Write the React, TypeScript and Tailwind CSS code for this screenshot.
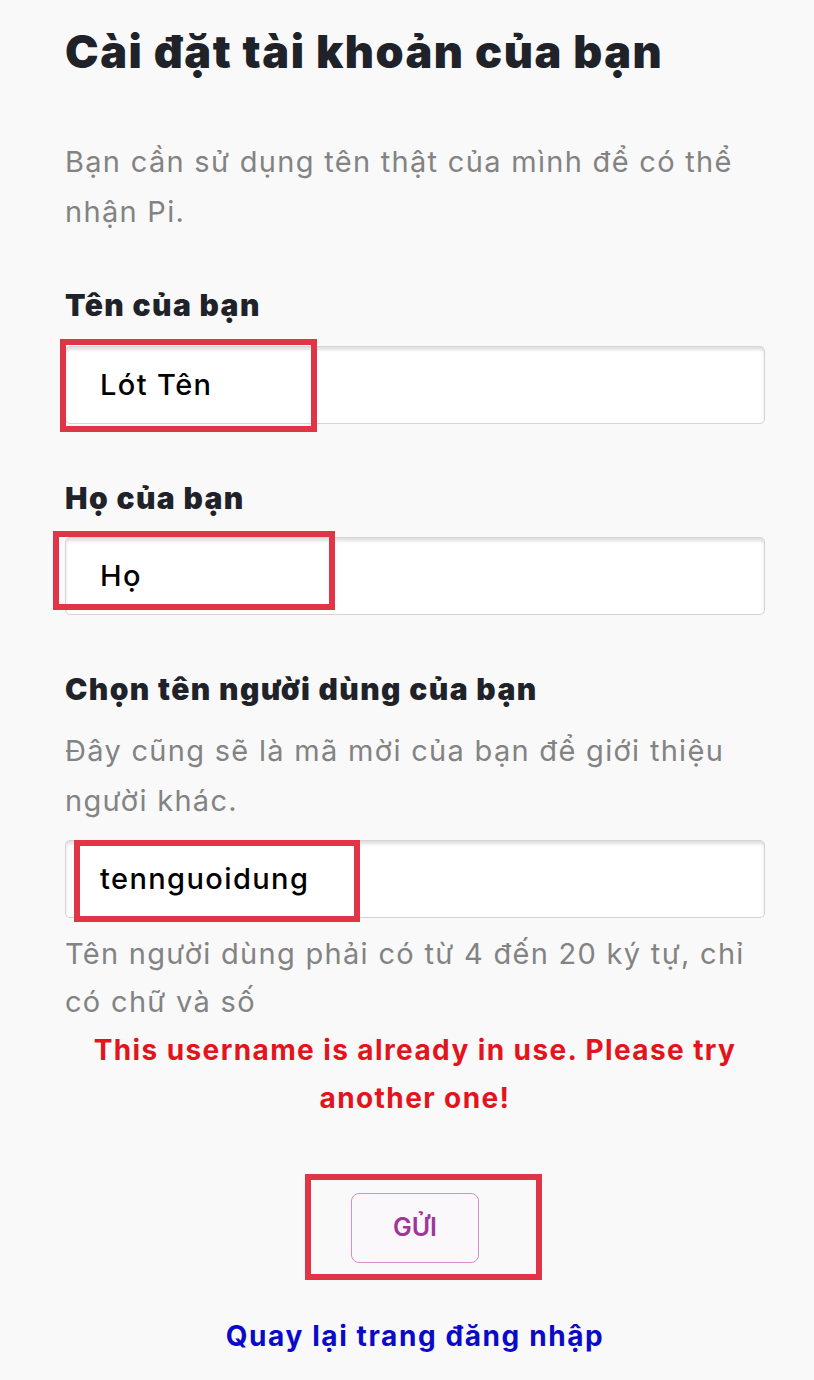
import React from 'react';

const font = { fontFamily: 'Inter, "Noto Sans", sans-serif' };

interface FieldProps {
  value: string;
  box: string;
}

// the red frames are annotations drawn on top of the form
const Field: React.FC<FieldProps> = ({ value, box }) => {
  return (
    <div className="relative">
      <div className="h-[78px] w-full rounded-[5px] border border-[#d4d4d4] bg-white shadow-[inset_0_3px_3px_rgba(0,0,0,0.12)] flex items-center pl-[34px] text-[29px] font-medium tracking-[1.4px] text-black">
        {value}
      </div>
      <div className={`absolute border-[6px] border-[#e03546] pointer-events-none ${box}`} />
    </div>
  );
};

export default function App() {
  return (
    <div className="min-h-[1380px] w-[814px] bg-[#f9f9f9] text-[#1f2329]" style={font}>
      <div className="pl-[65px] pr-[49px] pt-[22px]">
        <h1 className="text-[45px] font-black tracking-[1.5px] leading-[60px]">Cài đặt tài khoản của bạn</h1>

        <p className="mt-[55px] text-[29px] tracking-[1.3px] leading-[50px] text-[#838383]">
          Bạn cần sử dụng tên thật của mình để có thể
          <br />
          nhận Pi.
        </p>

        <h2 className="mt-[48px] text-[30px] font-black tracking-[1.4px] leading-[40px]">Tên của bạn</h2>
        <div className="mt-[21px]">
          <Field value="Lót Tên" box="left-[-5px] top-[-7px] w-[257px] h-[93px]" />
        </div>

        <h2 className="mt-[54px] text-[30px] font-black tracking-[1.4px] leading-[40px]">Họ của bạn</h2>
        <div className="mt-[19px]">
          <Field value="Họ" box="left-[-12px] top-[-6px] w-[282px] h-[79px]" />
        </div>

        <h2 className="mt-[54px] text-[30px] font-black tracking-[1.4px] leading-[40px]">Chọn tên người dùng của bạn</h2>
        <p className="mt-[17px] text-[29px] tracking-[1.3px] leading-[50px] text-[#838383]">
          Đây cũng sẽ là mã mời của bạn để giới thiệu
          <br />
          người khác.
        </p>
        <div className="mt-[14px]">
          <Field value="tennguoidung" box="left-[9px] top-0 w-[286px] h-[82px]" />
        </div>
        <p className="mt-[12px] text-[29px] tracking-[1.3px] leading-[48px] text-[#838383]">
          Tên người dùng phải có từ 4 đến 20 ký tự, chỉ
          <br />
          có chữ và số
        </p>
        <p className="mt-0 text-center text-[28px] font-bold tracking-[1.4px] leading-[48px] text-[#e3141c]">
          This username is already in use. Please try
          <br />
          another one!
        </p>

        <div className="mt-[71px] flex justify-center">
          <div className="relative">
            <button className="w-[128px] h-[70px] rounded-[8px] border border-[#d88fd0] bg-[#fbf8fb] text-[25px] font-semibold text-[#a0359a]">
              GỬI
            </button>
            <div className="absolute left-[-46px] top-[-19px] w-[237px] h-[106px] border-[6px] border-[#e03546] pointer-events-none" />
          </div>
        </div>

        <div className="mt-[52px] text-center">
          <a className="text-[28px] font-bold tracking-[1.6px] text-[#0a0acb]">Quay lại trang đăng nhập</a>
        </div>
      </div>
    </div>
  );
}
